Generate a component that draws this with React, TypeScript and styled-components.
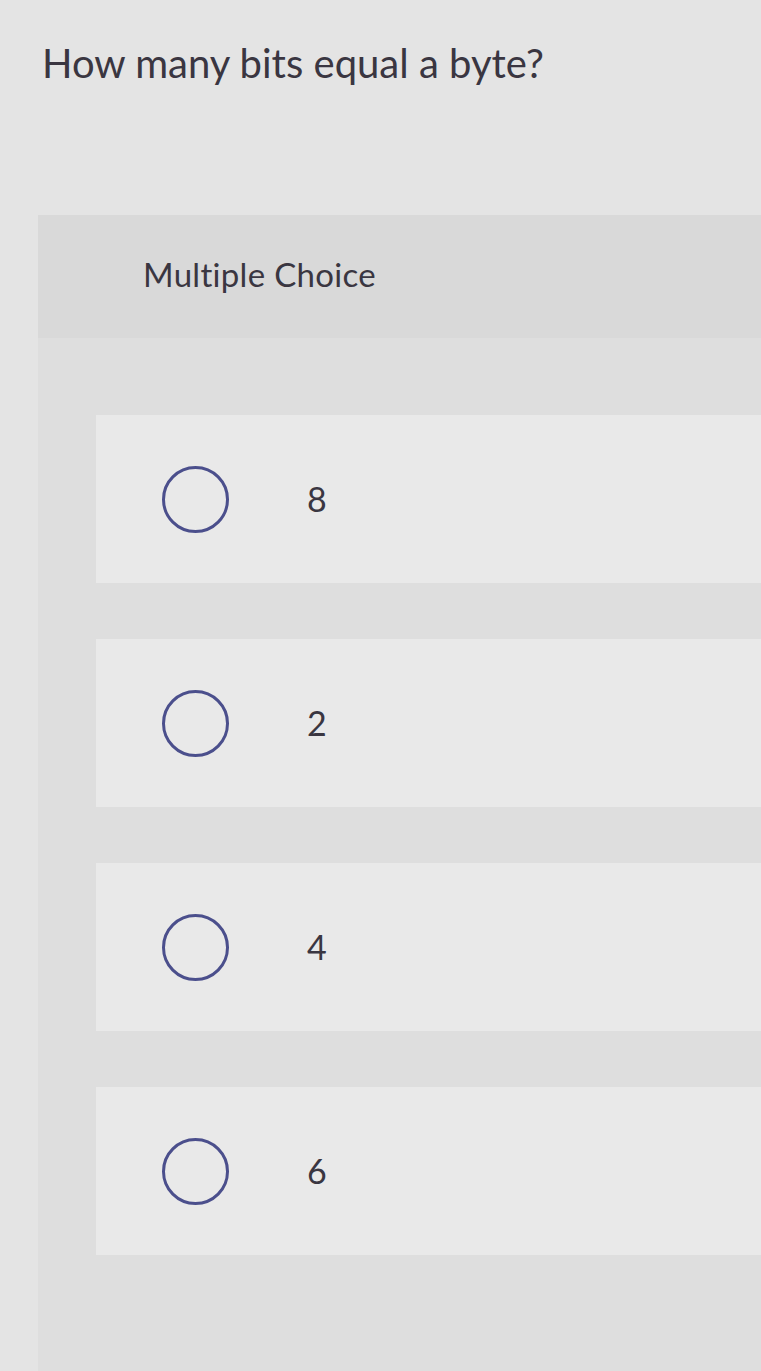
import React from 'react';
import styled, { createGlobalStyle } from 'styled-components';

const choices = ['8', '2', '4', '6'];

function App() {
  return (
    <>
      <GlobalStyle />
      <Styled.Page>
        <Styled.Question>How many bits equal a byte?</Styled.Question>
        <Styled.Panel>
          <Styled.PanelHeader>Multiple Choice</Styled.PanelHeader>
          <Styled.Choices>
            {choices.map((choice) => (
              <Styled.Choice key={choice}>
                <Styled.Radio />
                <Styled.Label>{choice}</Styled.Label>
              </Styled.Choice>
            ))}
          </Styled.Choices>
        </Styled.Panel>
      </Styled.Page>
    </>
  );
}

const GlobalStyle = createGlobalStyle`
  html, body {
    margin: 0;
    padding: 0;
    background: #e4e4e4;
  }
  body {
    font-family: Lato, "Open Sans", "Liberation Sans", sans-serif;
    color: #3a3641;
  }
`;

const Styled = {
  Page: styled.div`
    min-height: 1371px;
    display: flex;
    flex-direction: column;
    overflow: hidden;
  `,
  Question: styled.h1`
    margin: 0;
    padding: 39px 0 0 42px;
    font-size: 40px;
    line-height: 48px;
    font-weight: 400;
  `,
  Panel: styled.section`
    flex: 1;
    margin: 128px 0 0 38px;
    background: #dedede;
  `,
  PanelHeader: styled.h2`
    margin: 0;
    padding: 39px 0 44px 105px;
    font-size: 33px;
    line-height: 40px;
    font-weight: 400;
    letter-spacing: 0.3px;
    background: #d9d9d9;
  `,
  Choices: styled.div`
    display: flex;
    flex-direction: column;
    gap: 56px;
    padding: 77px 0 0 58px;
  `,
  Choice: styled.div`
    height: 168px;
    display: flex;
    align-items: center;
    padding-left: 66px;
    background: #e9e9e9;
  `,
  Radio: styled.span`
    box-sizing: border-box;
    width: 67px;
    height: 67px;
    border-radius: 50%;
    border: 3px solid #4b4f8c;
  `,
  Label: styled.span`
    margin-left: 78px;
    font-size: 34px;
    line-height: 1;
  `,
};

export default App;
